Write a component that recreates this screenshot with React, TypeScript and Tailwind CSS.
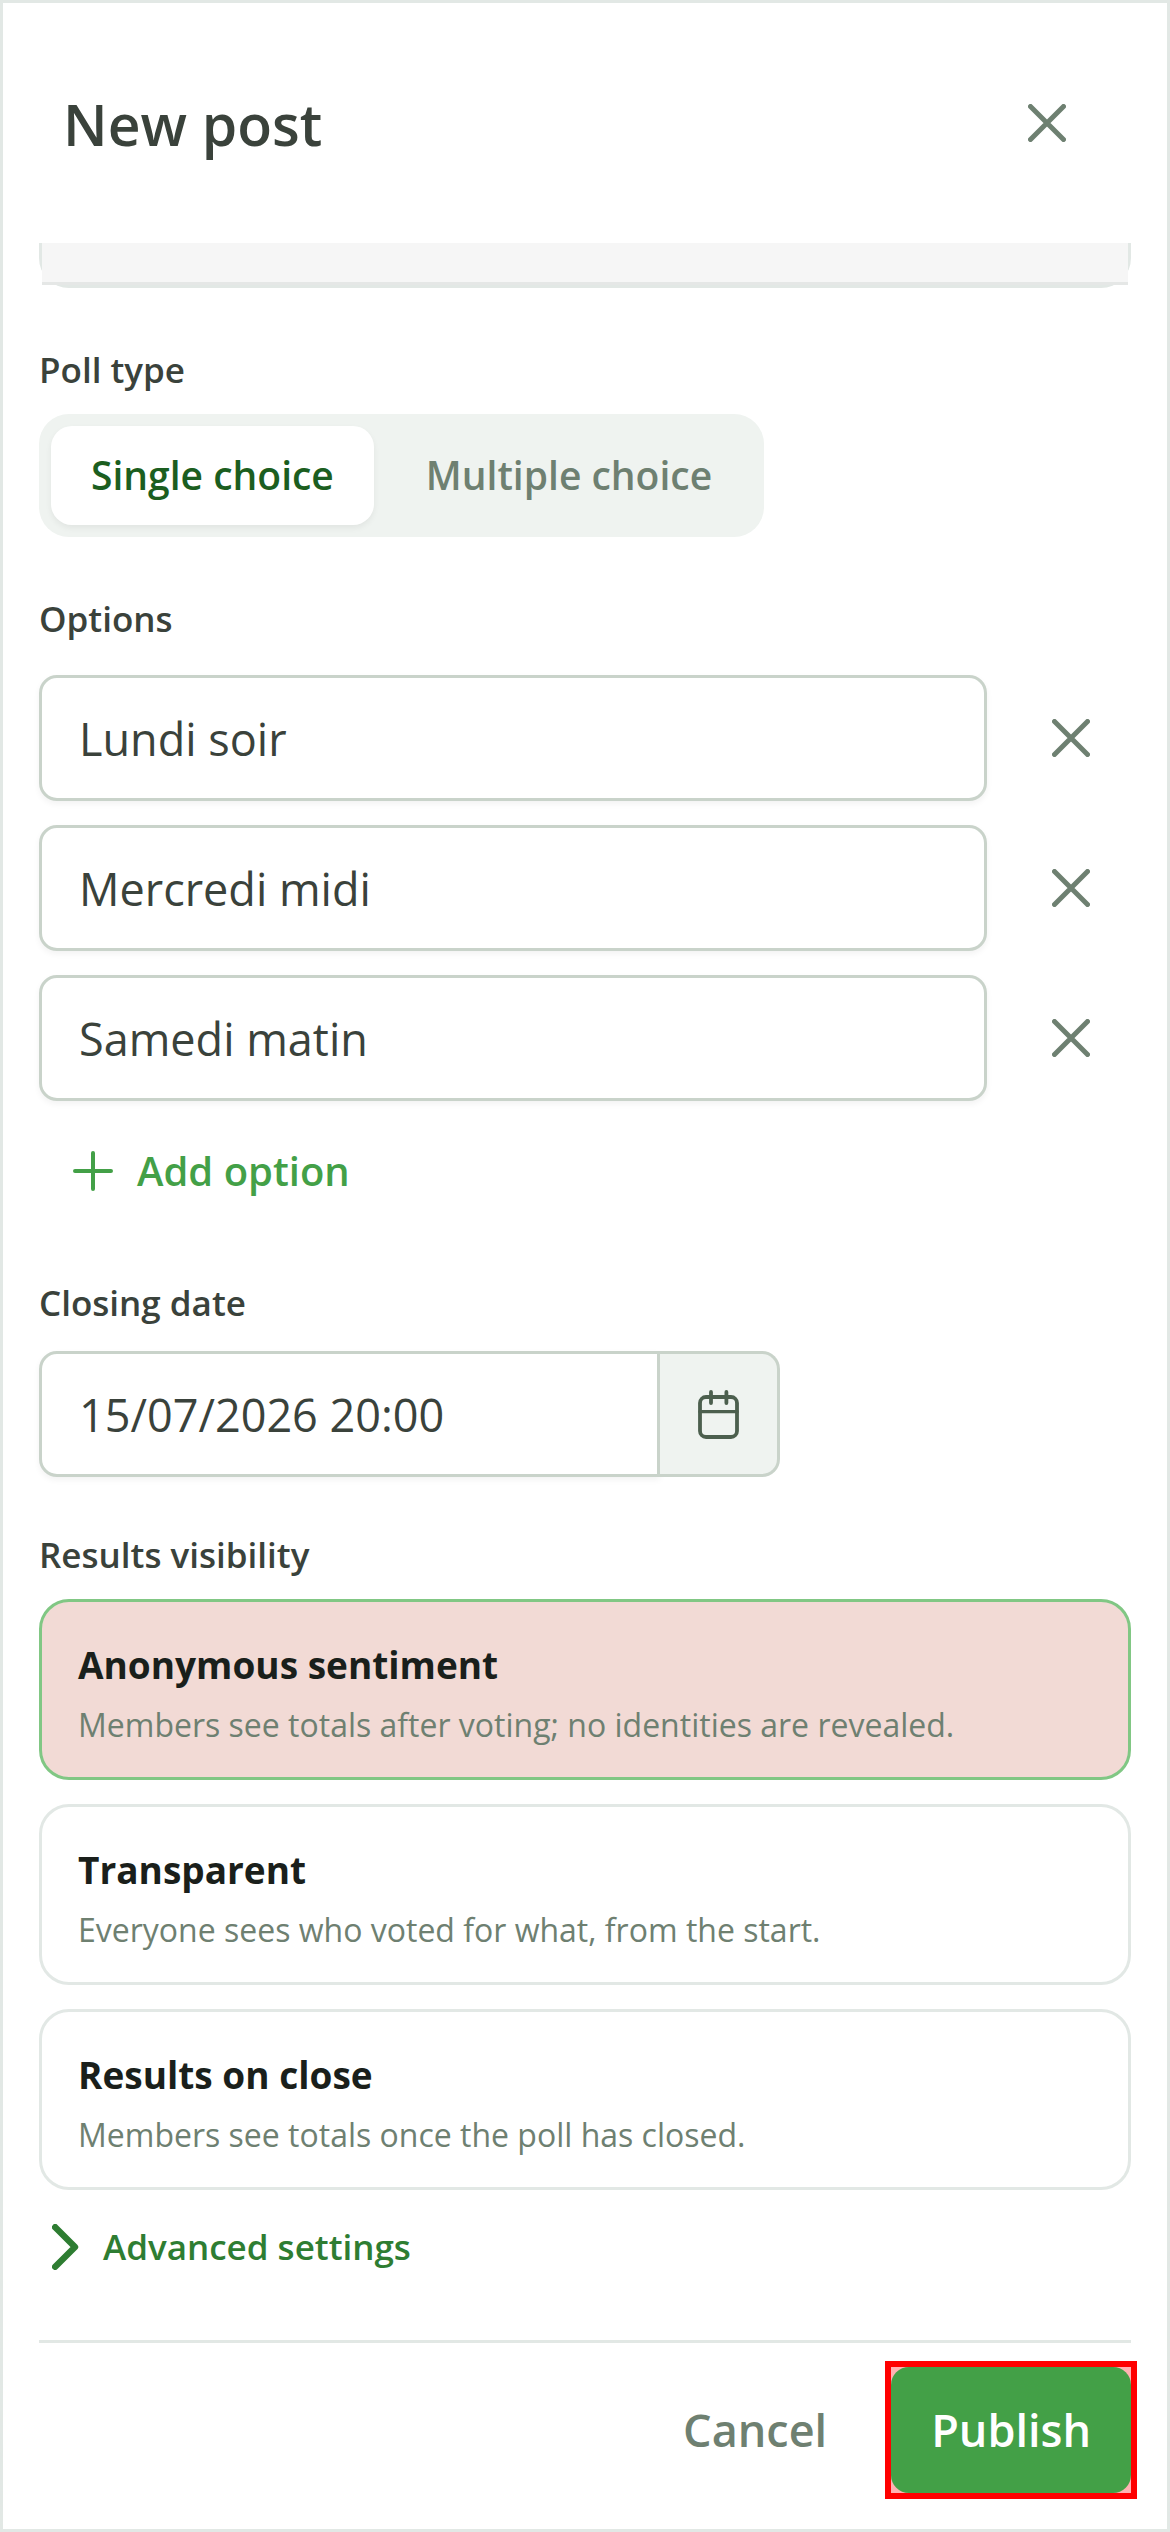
import React, { useState } from 'react';

const CrossIcon = () => (
  <svg className="size-[38px]" viewBox="0 0 38 38" fill="none" stroke="currentColor" strokeWidth="5" strokeLinecap="round" aria-hidden="true">
    <path d="M2.5 2.5 35.5 35.5M35.5 2.5 2.5 35.5" />
  </svg>
);

const PlusIcon = () => (
  <svg className="size-[40px]" viewBox="0 0 40 40" fill="none" stroke="currentColor" strokeWidth="4" strokeLinecap="round" aria-hidden="true">
    <path d="M20 2v36M2 20h36" />
  </svg>
);

const CalendarIcon = () => (
  <svg className="h-[49px] w-[41px]" viewBox="0 0 41 49" fill="none" stroke="currentColor" strokeWidth="3.8" strokeLinecap="round" aria-hidden="true">
    <rect x="2" y="7" width="37" height="40" rx="6" />
    <path d="M2 21.7h37" strokeWidth="3.3" />
    <path d="M13 2v11M28.400 2v11" />
  </svg>
);

const ChevronIcon = () => (
  <svg className="h-[46px] w-[27px]" viewBox="0 0 27 46" fill="none" stroke="currentColor" strokeWidth="6.4" strokeLinecap="round" strokeLinejoin="round" aria-hidden="true">
    <path d="M3.2 3.2 23 23 3.2 42.800" />
  </svg>
);

const visibilities = [
  { id: 'anonymous', title: 'Anonymous sentiment', text: 'Members see totals after voting; no identities are revealed.' },
  { id: 'transparent', title: 'Transparent', text: 'Everyone sees who voted for what, from the start.' },
  { id: 'on-close', title: 'Results on close', text: 'Members see totals once the poll has closed.' },
];

const labelClass = 'block text-[35px] leading-[48px] font-semibold';
const fieldClass = 'h-[126px] min-w-0 flex-1 border-[3px] border-[#c9d3ca] bg-white px-[37px] text-[45px] shadow-[0_3px_6px_rgba(0,0,0,0.05)] outline-none';

const App = () => {
  const [pollType, setPollType] = useState('Single choice');
  const [options, setOptions] = useState(['Lundi soir', 'Mercredi midi', 'Samedi matin']);
  const [closing, setClosing] = useState('15/07/2026 20:00');
  const [visibility, setVisibility] = useState('anonymous');

  return (
    <div className="flex min-h-screen flex-col border-[3px] border-[#e2e8e5] bg-white font-['Open_Sans','Noto_Sans',sans-serif] text-[#3a423b]">
      {/* Header */}
      <header className="flex h-[240px] shrink-0 items-center justify-between px-[60px]">
        <h1 className="pt-1 text-[57px] font-semibold">New post</h1>
        <button type="button" aria-label="Close" className="flex size-[120px] items-center justify-center text-[#6e8071]">
          <CrossIcon />
        </button>
      </header>

      <main className="px-[36px]">
        {/* Bottom edge of the scrolled editor */}
        <div className="h-[45px] rounded-b-[30px] border-x-[3px] border-b-[3px] border-[#e2e8e5]">
          <div className="h-full border-b-[3px] border-[#e5e7e6] bg-[#f6f6f6]" />
        </div>

        <section className="mt-[58px]">
          <h2 className={labelClass}>Poll type</h2>
          <div role="group" aria-label="Poll type" className="mt-5 inline-flex gap-3 rounded-[30px] bg-[#eff3f0] p-3 align-top">
            {['Single choice', 'Multiple choice'].map((type) => (
              <button
                key={type}
                type="button"
                aria-pressed={pollType === type}
                onClick={() => setPollType(type)}
                className={`h-[99px] rounded-[21px] px-10 text-[39px] font-semibold ${
                  pollType === type ? 'bg-white text-[#1b5e20] shadow-[0_3px_6px_rgba(0,0,0,0.06)]' : 'text-[#6e8071]'
                }`}
              >
                {type}
              </button>
            ))}
          </div>
        </section>

        <section className="mt-[58px]">
          <h2 className={labelClass}>Options</h2>
          <div className="mt-8 flex flex-col gap-6">
            {options.map((option, i) => (
              <div key={i} className="flex gap-6">
                <input
                  aria-label={`Option ${i + 1}`}
                  value={option}
                  onChange={(e) => setOptions(options.map((o, j) => (j === i ? e.target.value : o)))}
                  className={`${fieldClass} rounded-[18px]`}
                />
                <button
                  type="button"
                  aria-label={`Remove option ${i + 1}`}
                  onClick={() => setOptions(options.filter((_, j) => j !== i))}
                  className="flex w-[120px] items-center justify-center text-[#6e8071]"
                >
                  <CrossIcon />
                </button>
              </div>
            ))}
            <button
              type="button"
              onClick={() => setOptions([...options, ''])}
              className="flex h-24 items-center gap-6 self-start px-[34px] pb-1 text-[40px] font-semibold text-[#43a047]"
            >
              <PlusIcon />
              Add option
            </button>
          </div>
        </section>

        <section className="mt-[58px]">
          <label htmlFor="closing" className={labelClass}>Closing date</label>
          <div className="mt-6 flex max-w-[741px]">
            <input
              id="closing"
              value={closing}
              onChange={(e) => setClosing(e.target.value)}
              className={`${fieldClass} rounded-l-[18px]`}
            />
            <button
              type="button"
              aria-label="Choose date"
              className="flex w-[120px] items-center justify-center rounded-r-[18px] border-y-[3px] border-r-[3px] border-[#c9d3ca] bg-[#eff3f0] text-[#4c5f4e]"
            >
              <CalendarIcon />
            </button>
          </div>
        </section>

        <fieldset className="mt-[54px]">
          <legend className={labelClass}>Results visibility</legend>
          <div className="mt-5 flex flex-col gap-6">
            {visibilities.map((v) => (
              <label
                key={v.id}
                className={`block rounded-[30px] border-[3px] px-[36px] pt-[33px] pb-7 ${
                  visibility === v.id ? 'border-[#81c784] bg-[#f2dad5]' : 'border-[#e2e8e5]'
                }`}
              >
                <input
                  type="radio"
                  name="visibility"
                  checked={visibility === v.id}
                  onChange={() => setVisibility(v.id)}
                  className="sr-only"
                />
                <span className="block text-[37px] leading-[60px] font-bold text-[#1a1f1b]">{v.title}</span>
                <span className="mt-1.5 block text-[32px] leading-[48px] text-[#6e8071]">{v.text}</span>
              </label>
            ))}
          </div>
        </fieldset>

        <button type="button" className="mt-[33px] flex h-12 items-center gap-6 px-[13px] text-[35px] font-semibold text-[#2e7d32]">
          <ChevronIcon />
          Advanced settings
        </button>
      </main>

      {/* Actions */}
      <footer className="mx-[36px] mt-auto flex justify-end gap-6 border-t-[3px] border-[#e2e8e5] pt-6 pb-[36px]">
        <button type="button" className="h-[126px] px-10 text-[45px] font-semibold text-[#6e8071]">Cancel</button>
        <div className="bg-[#ffb2b2] outline-[6px] outline-[#ff0000]">
          <button type="button" className="h-[126px] rounded-[18px] bg-[#43a047] px-10 text-[45px] font-semibold text-white">Publish</button>
        </div>
      </footer>
    </div>
  );
};

export default App;
